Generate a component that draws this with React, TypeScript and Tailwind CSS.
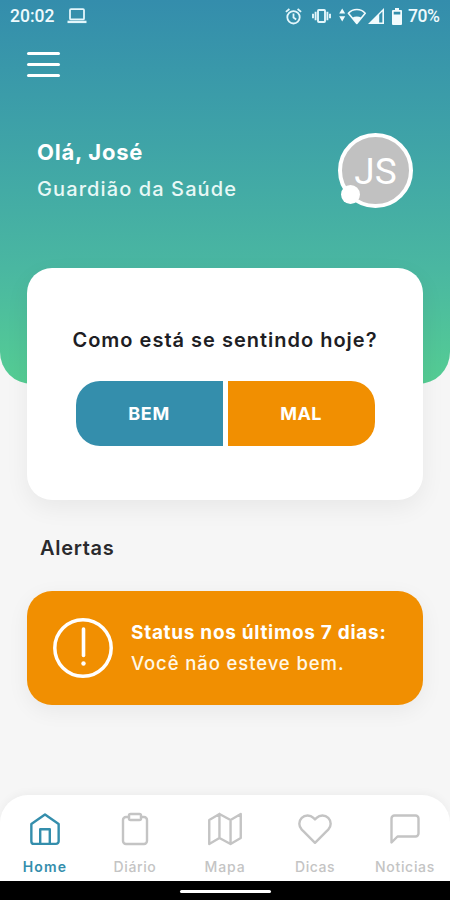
import { ReactNode } from "react";

function LaptopIcon() {
  return (
    <svg width="20" height="16" viewBox="0 0 20 16" fill="none" stroke="#e3f6fb" strokeWidth="1.8">
      <rect x="3" y="1.2" width="14" height="10.2" rx="1" />
      <path d="M0.5 13.9H19.5" strokeWidth="2.4" />
    </svg>
  );
}

function AlarmIcon() {
  return (
    <svg width="17" height="17" viewBox="0 0 17 17" fill="none" stroke="#e3f6fb" strokeWidth="1.8">
      <circle cx="8.5" cy="9.3" r="6.2" />
      <path d="M8.5 5.5V9.6L11.2 11.4M0.9 3.9L4.4 1M16.1 3.9L12.6 1" />
    </svg>
  );
}

function VibrateIcon() {
  return (
    <svg width="19" height="14" viewBox="0 0 19 14" fill="none" stroke="#e3f6fb" strokeWidth="1.9">
      <rect x="6" y="1" width="7" height="12" rx="0.8" />
      <path d="M3.6 2.8V11.2M15.4 2.8V11.2M1 4.8V9.2M18 4.8V9.2" />
    </svg>
  );
}

function WifiIcon() {
  return (
    <svg width="27" height="17" viewBox="0 0 27 17" fill="#f2fbfd">
      <path d="M3.2 0.5L6.2 5.6H0.2ZM3.2 13.5L6.2 8.2H0.2Z" />
      <path
        d="M9.4 5.2C14 0.3 21.8 0.3 26.2 5.2L17.8 15.4Z"
        fill="none"
        stroke="#f2fbfd"
        strokeWidth="1.6"
        strokeLinejoin="round"
      />
      <path d="M13.2 9.8C16 8 19.6 8 22.4 9.8L17.8 15.8Z" />
    </svg>
  );
}

function SignalIcon() {
  return (
    <svg width="16" height="16" viewBox="0 0 16 16" fill="#f2fbfd">
      <path d="M0 16L16 0V16ZM11.2 6.8V14.4H14.4V3.6Z" fillRule="evenodd" />
    </svg>
  );
}

function BatteryIcon() {
  return (
    <svg width="10" height="17" viewBox="0 0 10 17" fill="#f2fbfd" fillRule="evenodd">
      <path d="M3 0H7V2H9.2Q10 2 10 3V16Q10 17 9 17H1Q0 17 0 16V3Q0 2 1 2H3ZM1.7 3.8V6.6H8.3V3.8Z" />
    </svg>
  );
}

function NavIcon({ children }: { children: ReactNode }) {
  return (
    <svg
      width="36"
      height="36"
      viewBox="0 0 24 24"
      fill="none"
      stroke="currentColor"
      strokeWidth="1.6"
      strokeLinecap="round"
      strokeLinejoin="round"
    >
      {children}
    </svg>
  );
}

const tabs = [
  {
    label: "Home",
    className: "text-[#348eac] font-semibold tracking-[1.2px]",
    icon: (
      <>
        <path d="M2.9 8.6L12 2.3L21.1 8.6V20.1A1.8 1.8 0 0 1 19.3 21.9H4.7A1.8 1.8 0 0 1 2.9 20.1Z" />
        <path d="M8.8 21.8V12.2H15.2V21.8" />
      </>
    ),
  },
  {
    label: "Diário",
    className: "text-[#c4c4c4] font-medium tracking-[0.6px]",
    icon: (
      <>
        <path d="M16 4h2a2 2 0 0 1 2 2v14a2 2 0 0 1-2 2H6a2 2 0 0 1-2-2V6a2 2 0 0 1 2-2h2" />
        <rect x="8" y="2" width="8" height="4" rx="1" />
      </>
    ),
  },
  {
    label: "Mapa",
    className: "text-[#c4c4c4] font-medium tracking-[0.9px]",
    icon: <path d="M1.5 6V22L8.3 18L15.7 22L22.5 18V2L15.7 6L8.3 2ZM8.3 2V18M15.7 6V22" />,
  },
  {
    label: "Dicas",
    className: "text-[#c4c4c4] font-medium tracking-[0.5px]",
    icon: (
      <path d="M20.84 4.61a5.5 5.5 0 0 0-7.78 0L12 5.67l-1.06-1.06a5.5 5.5 0 0 0-7.78 7.78l1.06 1.06L12 21.23l7.78-7.78 1.06-1.06a5.5 5.5 0 0 0 0-7.78z" />
    ),
  },
  {
    label: "Noticias",
    className: "text-[#c4c4c4] font-medium tracking-[0.7px]",
    icon: <path d="M21 15a2 2 0 0 1-2 2H7l-4 4V5a2 2 0 0 1 2-2h14a2 2 0 0 1 2 2z" />,
  },
];

function StatusBar() {
  return (
    <div className="flex h-8 items-center pl-[10px] pr-[10px] font-[Roboto,sans-serif] text-[17.5px] leading-none text-[#eefafd]">
      <span className="pt-[2px] font-medium">20:02</span>
      <div className="ml-[13px]">
        <LaptopIcon />
      </div>
      <div className="ml-auto flex items-center">
        <AlarmIcon />
        <div className="ml-[10px]">
          <VibrateIcon />
        </div>
        <div className="ml-[8px]">
          <WifiIcon />
        </div>
        <div className="ml-[2px]">
          <SignalIcon />
        </div>
        <div className="ml-[8px]">
          <BatteryIcon />
        </div>
        <span className="ml-[6px] w-[32px] whitespace-nowrap pt-[2px] font-medium tracking-[-0.4px]">70%</span>
      </div>
    </div>
  );
}

export default function App() {
  return (
    <div className="flex h-[900px] w-[450px] flex-col overflow-hidden bg-[#f6f6f6] font-[Inter,sans-serif]">
      <header className="h-[384px] shrink-0 rounded-b-[32px] bg-linear-to-b from-[#348dac] via-[#4ab7a1] via-70% to-[#55cd93]">
        <StatusBar />
        <button className="ml-[27px] mt-[20px] flex flex-col gap-2">
          <span className="h-[3px] w-[33px] rounded-full bg-white" />
          <span className="h-[3px] w-[33px] rounded-full bg-white" />
          <span className="h-[3px] w-[33px] rounded-full bg-white" />
        </button>
        <div className="mt-[56px] flex items-start justify-between pl-[37px] pr-[37px] text-white">
          <div className="flex flex-col whitespace-nowrap pt-[8px]">
            <h1 className="text-[22px] font-bold leading-[22px] tracking-[0.75px]">Olá, José</h1>
            <p className="mt-[16px] text-[20px] font-medium leading-5 tracking-[1.1px] text-[#e8f8f6]">
              Guardião da Saúde
            </p>
          </div>
          <div className="relative flex size-[75px] items-center justify-center rounded-full border-4 border-white bg-[#c1c1c1] font-[Roboto,sans-serif] text-[37px] leading-none">
            <span className="pt-[2px]">JS</span>
            <span className="absolute -left-[1px] top-[48px] size-[19px] rounded-full bg-white" />
          </div>
        </div>
      </header>

      <main className="relative -mt-[116px] flex flex-1 flex-col px-[27px]">
        <section className="flex h-[232px] flex-col items-center rounded-[25px] bg-white pt-[62px] shadow-[0_8px_24px_rgba(0,0,0,0.06)]">
          <h2 className="whitespace-nowrap text-[20px] font-semibold leading-5 tracking-[1px] text-[#1e1e24]">
            Como está se sentindo hoje?
          </h2>
          <div className="mt-[31px] flex gap-[5px] text-[18px] font-bold text-white">
            <button className="h-[65px] w-[147px] rounded-l-[24px] bg-[#348eac] tracking-[0.7px]">BEM</button>
            <button className="h-[65px] w-[147px] rounded-r-[24px] bg-[#f18f01] tracking-[0.3px]">MAL</button>
          </div>
        </section>

        <h2 className="ml-[13px] mt-[38px] text-[20px] font-semibold leading-5 tracking-[0.7px] text-[#2a2a2d]">
          Alertas
        </h2>

        <section className="mt-[33px] flex h-[114px] items-center rounded-[25px] bg-[#f18f01] pl-[26px] text-white shadow-[0_6px_22px_rgba(0,0,0,0.06)]">
          <svg width="60" height="62" viewBox="0 0 60 62" fill="none" stroke="#fff" strokeLinecap="round">
            <circle cx="30" cy="31" r="28.2" strokeWidth="3.5" />
            <path d="M30.5 12V38.5" strokeWidth="3.6" />
            <circle cx="30.5" cy="46.5" r="2.2" fill="#fff" stroke="none" />
          </svg>
          <div className="ml-[18px] flex flex-col gap-3 whitespace-nowrap leading-[18px]">
            <strong className="text-[19px] font-bold tracking-[0.7px]">Status nos últimos 7 dias:</strong>
            <span className="text-[18.5px] font-medium tracking-[0.9px] text-[#fff8e8]">Você não esteve bem.</span>
          </div>
        </section>
      </main>

      <nav className="flex h-[86px] shrink-0 rounded-t-[28px] bg-white shadow-[0_-2px_8px_rgba(0,0,0,0.04)]">
        {tabs.map((tab) => (
          <a key={tab.label} className={`flex w-[90px] flex-col items-center pt-[15.5px] text-[14px] leading-[14px] ${tab.className}`}>
            <NavIcon>{tab.icon}</NavIcon>
            <span className="mt-[13.5px]">{tab.label}</span>
          </a>
        ))}
      </nav>
      <div className="flex h-[19px] shrink-0 items-center justify-center bg-black pt-[1px]">
        <div className="h-[3px] w-[91px] rounded-full bg-white" />
      </div>
    </div>
  );
}
